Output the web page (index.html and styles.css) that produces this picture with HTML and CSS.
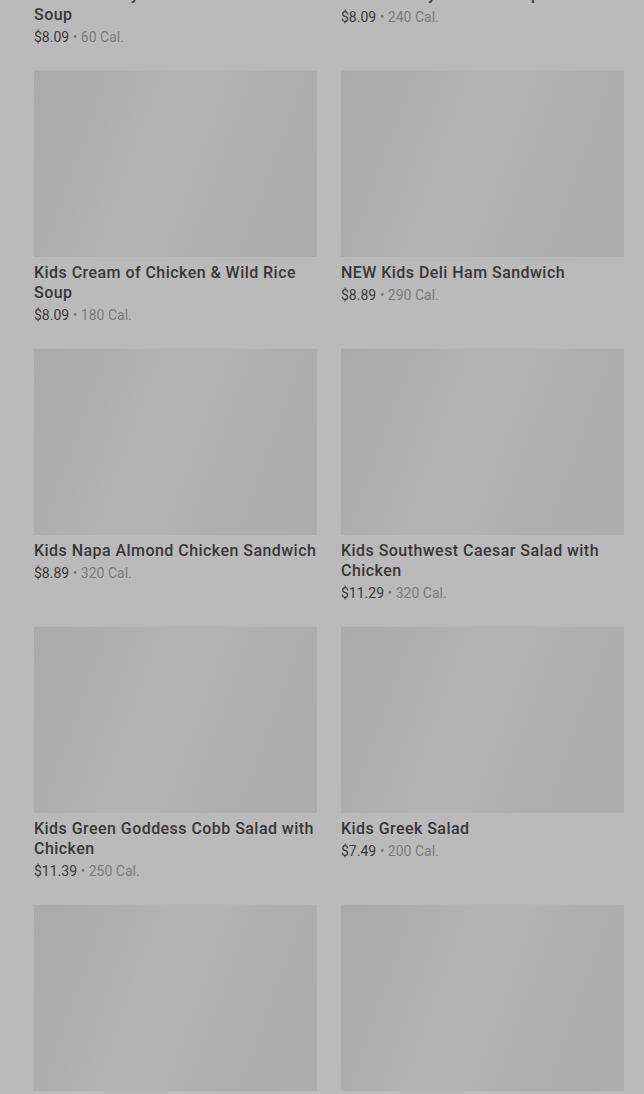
FILE: index.html
```html
<!DOCTYPE html>
<html lang="en">
<head>
    <meta charset="UTF-8">
    <meta name="viewport" content="width=device-width, initial-scale=1.0">
    <title>Kids Menu</title>
    <link rel="stylesheet" href="styles.css">
</head>
<body>
    <div class="menu-grid">
        <div class="item">
            <div class="item-image"></div>
            <div class="item-name">Kids Homestyle Chicken Noodle Soup</div>
            <div class="item-meta"><span class="price">$8.09</span> • <span class="cal">60 Cal.</span></div>
        </div>
        <div class="item">
            <div class="item-image"></div>
            <div class="item-name">Kids Creamy Tomato Soup</div>
            <div class="item-meta"><span class="price">$8.09</span> • <span class="cal">240 Cal.</span></div>
        </div>
        <div class="item">
            <div class="item-image"></div>
            <div class="item-name">Kids Cream of Chicken &amp; Wild Rice Soup</div>
            <div class="item-meta"><span class="price">$8.09</span> • <span class="cal">180 Cal.</span></div>
        </div>
        <div class="item">
            <div class="item-image"></div>
            <div class="item-name">NEW Kids Deli Ham Sandwich</div>
            <div class="item-meta"><span class="price">$8.89</span> • <span class="cal">290 Cal.</span></div>
        </div>
        <div class="item">
            <div class="item-image"></div>
            <div class="item-name">Kids Napa Almond Chicken Sandwich</div>
            <div class="item-meta"><span class="price">$8.89</span> • <span class="cal">320 Cal.</span></div>
        </div>
        <div class="item">
            <div class="item-image"></div>
            <div class="item-name">Kids Southwest Caesar Salad with Chicken</div>
            <div class="item-meta"><span class="price">$11.29</span> • <span class="cal">320 Cal.</span></div>
        </div>
        <div class="item">
            <div class="item-image"></div>
            <div class="item-name">Kids Green Goddess Cobb Salad with Chicken</div>
            <div class="item-meta"><span class="price">$11.39</span> • <span class="cal">250 Cal.</span></div>
        </div>
        <div class="item">
            <div class="item-image"></div>
            <div class="item-name">Kids Greek Salad</div>
            <div class="item-meta"><span class="price">$7.49</span> • <span class="cal">200 Cal.</span></div>
        </div>
        <div class="item">
            <div class="item-image"></div>
            <div class="item-name">Kids Grilled Cheese</div>
            <div class="item-meta"><span class="price">$7.49</span> • <span class="cal">390 Cal.</span></div>
        </div>
        <div class="item">
            <div class="item-image"></div>
            <div class="item-name">Kids Mac &amp; Cheese</div>
            <div class="item-meta"><span class="price">$7.49</span> • <span class="cal">470 Cal.</span></div>
        </div>
    </div>
</body>
</html>
```

FILE: styles.css
```css
body {
    margin: 0;
    background-color: #bababa;
    font-family: Roboto, "Noto Sans", sans-serif;
    overflow: hidden;
}
.menu-grid {
    display: grid;
    grid-template-columns: 283px 283px;
    column-gap: 24px;
    row-gap: 23px;
    padding: 0 20px 0 34px;
    margin-top: -208px;
}
.item-image {
    height: 187px;
    background-color: #adadad;
    background-image: linear-gradient(110deg, #aaaaaa 0%, #adadad 20%, #b3b3b3 38%, #b3b3b3 55%, #aeaeae 70%, #acacac 100%);
    box-shadow: inset 0 1px 0 #b5b5b5;
}
.item-name {
    margin-top: 6px;
    font-size: 16px;
    font-weight: 500;
    line-height: 20px;
    letter-spacing: 0.45px;
    color: #383838;
}
.item-meta {
    margin-top: 2px;
    font-size: 14px;
    line-height: 20px;
    color: #7a7a7a;
}
.item-meta .price {
    color: #3a3a3a;
}
```
